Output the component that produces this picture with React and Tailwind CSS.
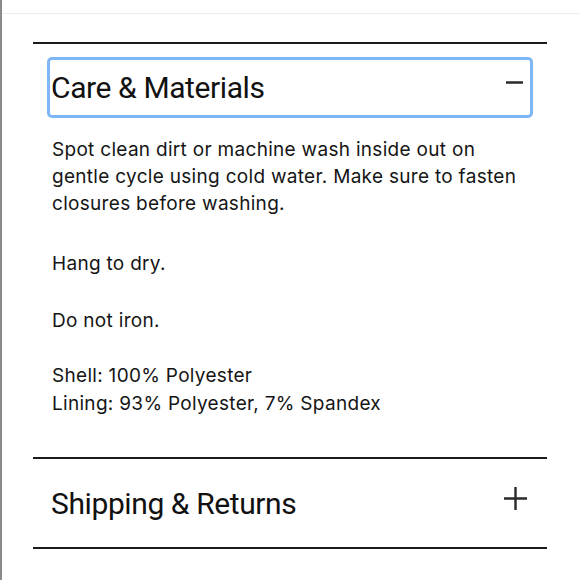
import React, { useState } from 'react';

const Minus = () => (
    <svg width="17" height="17" viewBox="0 0 17 17" fill="none" stroke="#2a2a2a" strokeWidth="2.5">
        <path d="M0 8.5h17" />
    </svg>
);

const Plus = () => (
    <svg width="23" height="23" viewBox="0 0 23 23" fill="none" stroke="#2a2a2a" strokeWidth="2.4">
        <path d="M0 11.5h23M11.5 0v23" />
    </svg>
);

const App = () => {
    const [open, setOpen] = useState({ care: true, shipping: false });

    return (
        <div className="min-h-[580px] bg-white border-l-2 border-[#8a8a8a]" style={{ fontFamily: 'Inter, "Noto Sans", sans-serif' }}>
            <div className="h-[14px] border-b border-[#ececec]" />
            <div className="pl-[31px] pr-[33px] pt-[28px]">
                {/* Care & Materials */}
                <div className="border-t-2 border-[#1a1a1a]">
                    <div className="px-[14px] pt-[13px]">
                        <button
                            onClick={() => setOpen({ ...open, care: !open.care })}
                            className="w-full h-[61px] flex items-center justify-between pl-[4px] pr-[10px] rounded-[5px] outline-none ring-[3px] ring-inset ring-[#7fb6f6] text-left"
                        >
                            <span className="text-[30px] text-[#111] tracking-[-0.4px]" style={{ fontFamily: 'Roboto, sans-serif' }}>Care &amp; Materials</span>
                            <span className="mb-[11px] flex"><Minus /></span>
                        </button>
                    </div>
                    {open.care && (
                        <div className="pl-[19px] pr-[15px] pt-[18px] pb-[39px] text-[19px] leading-[27px] tracking-[0.3px] text-[#151515]">
                            <p className="mb-[33px]">Spot clean dirt or machine wash inside out on gentle cycle using cold water. Make sure to fasten closures before washing.</p>
                            <p className="mb-[30px]">Hang to dry.</p>
                            <p className="mb-[28px]">Do not iron.</p>
                            <p className="leading-[28px]">Shell: 100% Polyester<br />Lining: 93% Polyester, 7% Spandex</p>
                        </div>
                    )}
                </div>

                {/* Shipping & Returns */}
                <div className="border-t-2 border-b-2 border-[#1a1a1a]">
                    <button
                        onClick={() => setOpen({ ...open, shipping: !open.shipping })}
                        className="w-full h-[88px] flex items-center justify-between pl-[18px] pr-[20px] text-left"
                    >
                        <span className="text-[30px] text-[#111] tracking-[-0.4px]" style={{ fontFamily: 'Roboto, sans-serif' }}>Shipping &amp; Returns</span>
                        <span className="mb-[10px] flex"><Plus /></span>
                    </button>
                </div>
            </div>
        </div>
    );
};

export default App;
